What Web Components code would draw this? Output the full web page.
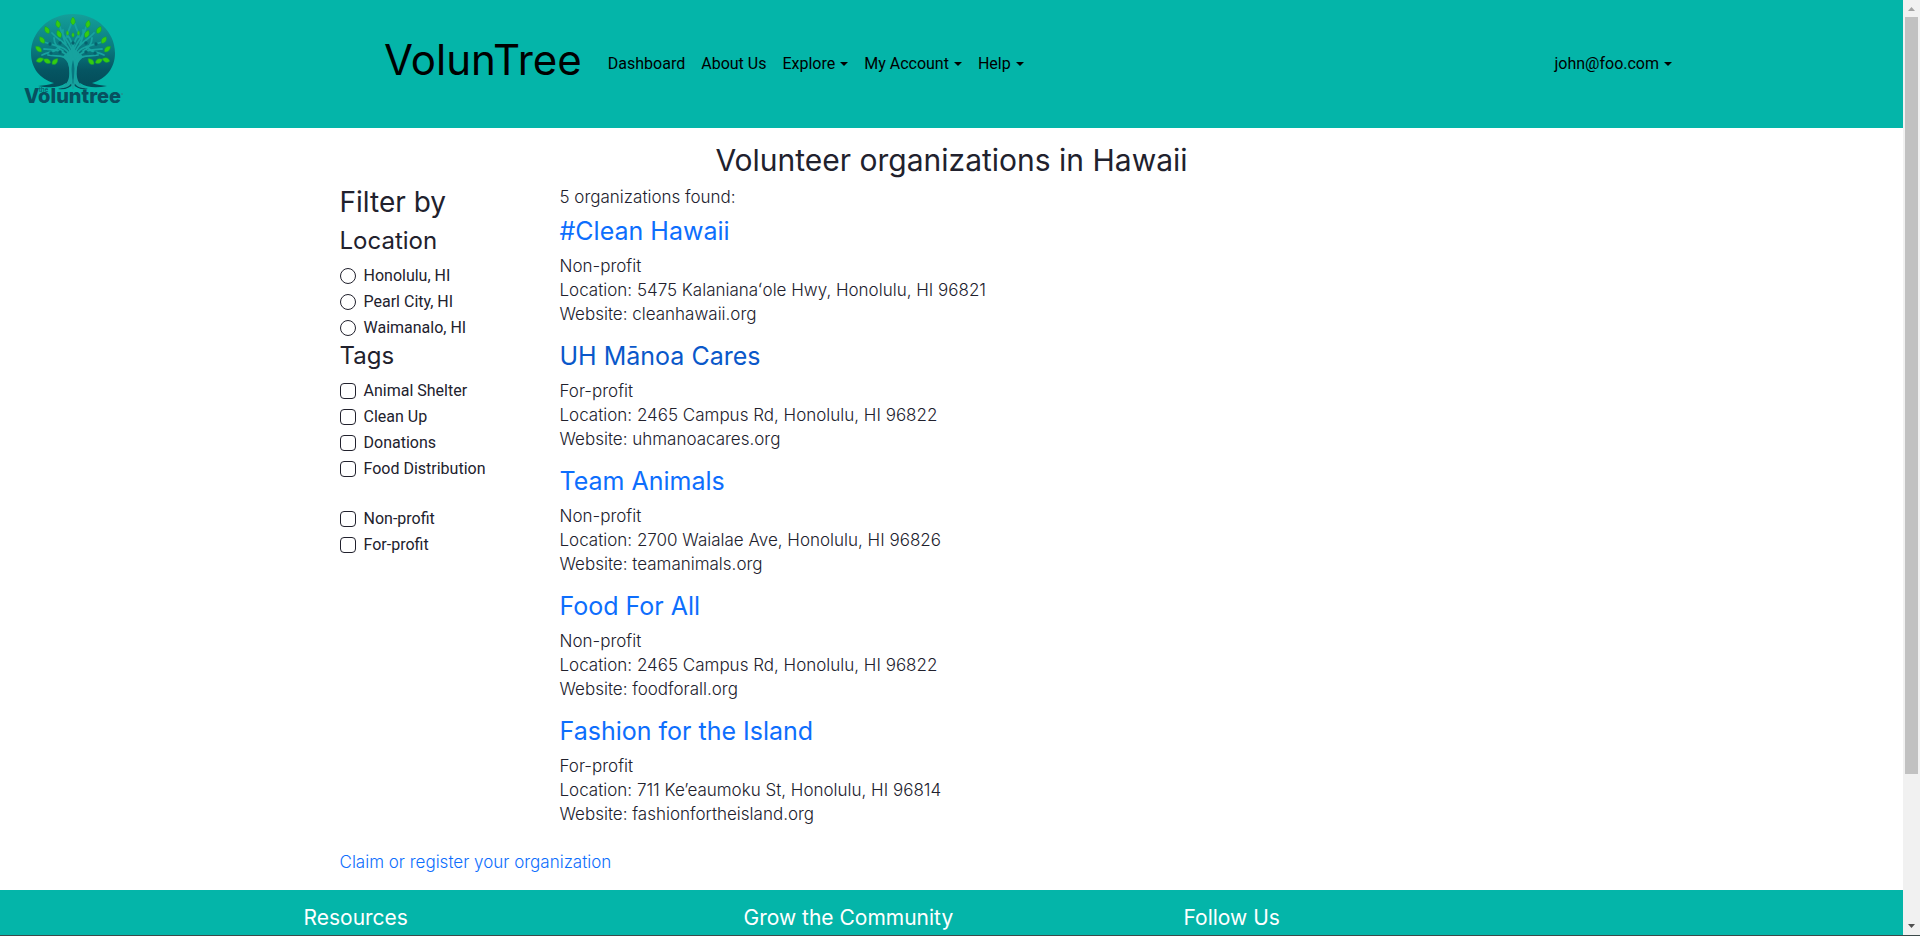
<!DOCTYPE html>
<html lang="en">
<head>
<meta charset="utf-8">
<title>VolunTree</title>
<style>
  body { margin: 0; font-family: Inter, sans-serif; color: #21212d; background: #fff; }
</style>
</head>
<body>
<vt-shell>
  <vt-header slot="header"></vt-header>
  <vt-organizations slot="main">
    <vt-filters slot="filters"></vt-filters>
    <vt-org name="#Clean Hawaii" kind="Non-profit" address="5475 Kalanianaʻole Hwy, Honolulu, HI 96821" site="cleanhawaii.org"></vt-org>
    <vt-org active name="UH Mānoa Cares" kind="For-profit" address="2465 Campus Rd, Honolulu, HI 96822" site="uhmanoacares.org"></vt-org>
    <vt-org name="Team Animals" kind="Non-profit" address="2700 Waialae Ave, Honolulu, HI 96826" site="teamanimals.org"></vt-org>
    <vt-org name="Food For All" kind="Non-profit" address="2465 Campus Rd, Honolulu, HI 96822" site="foodforall.org"></vt-org>
    <vt-org name="Fashion for the Island" kind="For-profit" address="711 Ke’eaumoku St, Honolulu, HI 96814" site="fashionfortheisland.org"></vt-org>
  </vt-organizations>
  <vt-footer slot="footer"></vt-footer>
</vt-shell>

<script>
const define = (name, render) => customElements.define(name, class extends HTMLElement {
  connectedCallback() {
    if (this.shadowRoot) return;
    const template = document.createElement('template');
    template.innerHTML = render(this);
    this.attachShadow({ mode: 'open' }).append(template.content.cloneNode(true));
  }
});

define('vt-scrollbar', () => `
<style>
  :host { display: flex; flex-direction: column; background: #f1f1f1; }
  svg { display: block; width: 100%; height: 17px; flex: none; }
  .track { flex: 1; padding: 0 2px; }
  .thumb { height: 84%; background: #c1c1c1; }
</style>
<svg viewBox="0 0 17 17"><path d="M5 11h7L8.500 7z" fill="#a3a3a3"/></svg>
<div class="track"><div class="thumb"></div></div>
<svg viewBox="0 0 17 17"><path d="M5 6h7L8.500 10z" fill="#505050"/></svg>`);

define('vt-shell', () => `
<style>
  :host { display: grid; grid-template-columns: minmax(0, 1fr) 17px; height: 100vh; box-sizing: border-box; overflow: hidden; border-bottom: 1px solid #3c4a4a; }
  .page { display: flex; flex-direction: column; min-height: 0; overflow: hidden; }
  slot { display: contents; }
</style>
<div class="page"><slot name="header"></slot><slot name="main"></slot><slot name="footer"></slot></div>
<vt-scrollbar aria-hidden="true"></vt-scrollbar>`);

define('vt-logo', () => {
  const leaves = [[73,21,0],[58,24,-12],[88,24,12],[47,30,-28],[99,30,28],[59,34,-25],[87,34,25],[67.500,33,-8],[78.500,33,8],[73,35,0],[42,40,-35],[104,40,35],[38.500,49,-48],[107.500,49,48],[40,60,70],[47,61,-65],[55,61.500,45],[106,60,-70],[99,61,65],[91,61.500,-45]];
  const dots = [[50,44],[96,44],[60,43],[86,43],[51,53],[95,53],[60,52],[86,52],[73,43]];
  const half = `
    <path d="M73 88C71 84 71 66 68 60C64 54 55 57 48 55M70 62C67 50 57 50 44 49M71 59C69 46 55 46 44 42M72 57C70 44 60 42 52 33M73 55C72 42 62 38 60 27M73 53C74 46 70 38 68 36M63 51C58 49 54 44 54 38M66 44C64 40 62 36 63 30M57 49C54 52 49 52 42 55M67 37C67 32 70 29 71 24"/>`;
  return `
<style>
  :host { display: block; }
  a, svg { display: block; }
  svg { width: 153px; height: 128px; }
  text { font-family: Inter, sans-serif; fill: #07505f; }
</style>
<a href="#" aria-label="Voluntree">
<svg viewBox="0 0 153 128">
  <defs><linearGradient id="g" x1="0" y1="0" x2="0" y2="1">
    <stop offset="0" stop-color="#149f9a"/><stop offset=".45" stop-color="#0a7a80"/><stop offset=".75" stop-color="#055562"/><stop offset="1" stop-color="#034b58"/>
  </linearGradient></defs>
  <path d="M73 14C97 14 115 32 115 53C115 68 106 79 92 83C97 85 102 85 107 86C97 88 87 88 80 83C80 87 84 88 88 89C81 90 76 88 73 84C70 88 65 90 58 89C62 88 66 87 66 83C59 88 49 88 38 86C44 85 49 85 54 83C40 79 31 68 31 53C31 32 49 14 73 14Z" fill="url(#g)"/>
  <path d="M62 57C69 61 70 67 69 77C68 83 65 86 58 88C68 89 71 85 73 80C75 85 78 89 88 88C81 86 78 83 77 77C76 67 77 61 84 57L73 48Z" fill="#17a39f"/>
  <path d="M73 60C71 67 71 76 73 84C75 76 75 67 73 60Z" fill="#087780"/>
  <g fill="none" stroke="#17a39f" stroke-width="1.800" stroke-linecap="round">
    ${half}<g transform="matrix(-1 0 0 1 146 0)">${half}</g>
  </g>
  <g fill="#07616d">${dots.map(([x, y]) => `<circle cx="${x}" cy="${y}" r="1.700"/>`).join('')}</g>
  <g fill="#35cc10" stroke="#12a03c" stroke-width=".5">${leaves.map(([x, y, r], i) => `<path transform="translate(${x} ${y}) rotate(${r})${i > 6 && i < 10 ? ' scale(.6)' : ''}" d="M0-4C3-1 3 2 0 4C-3 2-3-1 0-4Z"/>`).join('')}</g>
  <text x="24" y="103" font-size="20" font-weight="800">Voluntree</text>
  <text x="39" y="92" font-size="6" font-weight="500">the</text>
  <circle cx="122" cy="94" r="1" fill="#23908f"/>
</svg></a>`;
});

define('vt-nav-item', el => `
<style>
  :host { display: block; }
  a, button { display: flex; align-items: center; gap: 5px; padding: 0; border: 0; background: none; color: #000; font: 16px/24px Roboto, sans-serif; text-decoration: none; cursor: pointer; white-space: nowrap; }
  i { border: 4px solid transparent; border-top-color: currentColor; border-bottom: 0; }
</style>
${el.hasAttribute('menu') ? '<button type="button" aria-haspopup="true"><slot></slot><i></i></button>' : '<a href="#"><slot></slot></a>'}`);

define('vt-header', () => `
<style>
  :host { display: flex; flex: none; align-items: center; background: #04b5a9; }
  vt-logo { flex: none; }
  nav { display: flex; align-items: center; gap: 16px; flex: 1; max-width: 1288px; margin: 0 auto; padding: 0 16px; }
  .brand { margin-right: 10px; color: #000; font-size: 42px; line-height: 60px; text-decoration: none; padding-bottom: 8px; }
  .user { margin-left: auto; }
</style>
<vt-logo></vt-logo>
<nav aria-label="Main">
  <a class="brand" href="#">VolunTree</a>
  <vt-nav-item>Dashboard</vt-nav-item>
  <vt-nav-item>About Us</vt-nav-item>
  <vt-nav-item menu>Explore</vt-nav-item>
  <vt-nav-item menu>My Account</vt-nav-item>
  <vt-nav-item menu>Help</vt-nav-item>
  <vt-nav-item menu class="user">john@foo.com</vt-nav-item>
</nav>`);

define('vt-check', el => {
  const type = el.getAttribute('type') || 'checkbox';
  return `
<style>
  :host { display: block; margin-bottom: 2px; }
  label { display: flex; align-items: center; gap: 8px; font: 16px/24px Roboto, sans-serif; }
  input { appearance: none; box-sizing: border-box; width: 16px; height: 16px; margin: 0; border: 1px solid #21212d; border-radius: 4px; background: #fff; }
  input[type=radio] { border-radius: 50%; }
  input:checked { background: #0d6efd; border-color: #0d6efd; }
</style>
<label><input type="${type}"${type === 'radio' ? ' name="location"' : ''}><slot></slot></label>`;
});

define('vt-filters', () => `
<style>
  :host { display: block; }
  h2, h3 { margin: 0; font-weight: 400; }
  h2 { font-size: 28px; line-height: 34px; margin-bottom: 8px; }
  h3 { font-size: 24px; line-height: 28px; margin-bottom: 9px; }
  .kind { margin-top: 26px; }
</style>
<h2>Filter by</h2>
<h3>Location</h3>
<vt-check type="radio">Honolulu, HI</vt-check>
<vt-check type="radio">Pearl City, HI</vt-check>
<vt-check type="radio">Waimanalo, HI</vt-check>
<h3>Tags</h3>
<vt-check>Animal Shelter</vt-check>
<vt-check>Clean Up</vt-check>
<vt-check>Donations</vt-check>
<vt-check>Food Distribution</vt-check>
<div class="kind">
  <vt-check>Non-profit</vt-check>
  <vt-check>For-profit</vt-check>
</div>`);

define('vt-org', el => `
<style>
  :host { display: block; margin-bottom: 16px; }
  h3 { margin: 0 0 8px; font-size: 25px; font-weight: 400; line-height: 29px; }
  a { color: #0d6efd; text-decoration: none; }
  :host([active]) a { color: #0a58ca; }
  p { margin: 0; font-size: 17px; font-weight: 300; line-height: 24px; }
</style>
<h3><a href="#">${el.getAttribute('name')}</a></h3>
<p>${el.getAttribute('kind')}</p>
<p>Location: ${el.getAttribute('address')}</p>
<p>Website: ${el.getAttribute('site')}</p>`);

define('vt-organizations', () => `
<style>
  :host { display: block; flex: none; width: 100%; max-width: 1320px; box-sizing: border-box; margin: 0 auto; padding: 16px 48px; }
  h1 { margin: 0 0 8px; font-size: 30px; font-weight: 400; line-height: 33px; text-align: center; }
  .columns { display: grid; grid-template-columns: 220px minmax(0, 1fr); }
  p { margin: 0 0 8px; }
  p, .claim { font-size: 17px; font-weight: 300; line-height: 24px; }
  .claim { display: inline-block; margin-top: 8px; color: #0d6efd; text-decoration: none; }
</style>
<h1>Volunteer organizations in Hawaii</h1>
<div class="columns">
  <slot name="filters"></slot>
  <div><p>5 organizations found:</p><slot></slot></div>
</div>
<a class="claim" href="#">Claim or register your organization</a>`);

define('vt-footer', () => `
<style>
  :host { display: block; flex: 1 0 auto; background: #04b5a9; color: #fff; }
  div { display: grid; grid-template-columns: repeat(3, 1fr); max-width: 1320px; margin: 0 auto; padding: 16px 0 0; }
  h2 { margin: 0; padding: 0 12px; font-size: 21px; font-weight: 400; line-height: 24px; }
</style>
<div><h2>Resources</h2><h2>Grow the Community</h2><h2>Follow Us</h2></div>`);
</script>
</body>
</html>
